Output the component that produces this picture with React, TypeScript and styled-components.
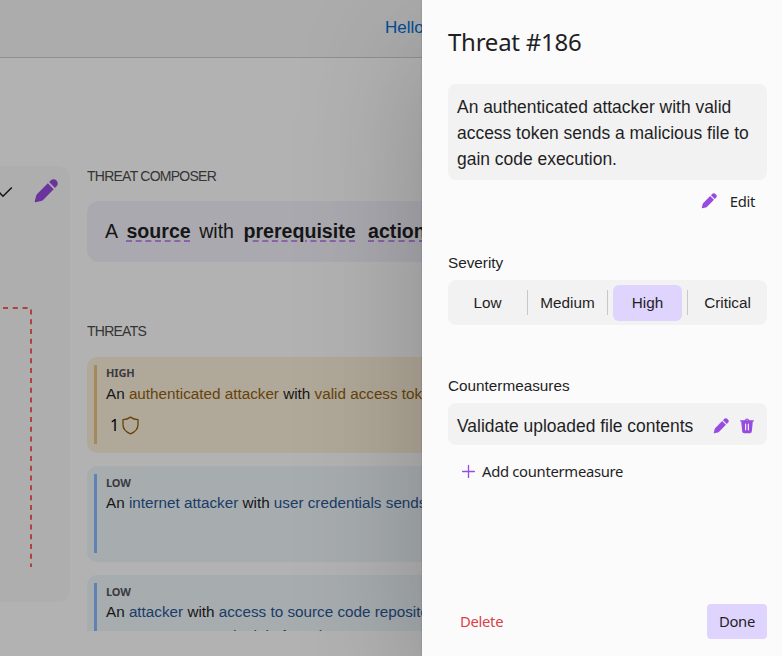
import React from 'react';
import styled, { createGlobalStyle, css } from 'styled-components';

const GlobalStyle = createGlobalStyle`
  * { box-sizing: border-box; }
  html, body, #root { height: 100%; }
  body {
    margin: 0;
    overflow: hidden;
    background: #fff;
    color: #1f1f26;
    font-family: "Liberation Sans", Arial, sans-serif;
  }
  button { font: inherit; color: inherit; border: 0; background: none; padding: 0; margin: 0; }
`;

const Shell = styled.div`
  position: relative;
  height: 656px;
  width: 782px;
  overflow: hidden;
`;

const TopBar = styled.header`
  display: flex;
  height: 58px;
  padding: 18px 0 0 385px;
  background: #f6f6f6;
  border-bottom: 1px solid #cfcfcf;
`;

const UserLink = styled.a`
  font-size: 17px;
  line-height: 20px;
  color: #0070d8;
  white-space: nowrap;
`;

const Main = styled.main`
  display: flex;
  align-items: flex-start;
  gap: 17px;
  padding-top: 108px;
`;

const Canvas = styled.section`
  flex: 0 0 70px;
  height: 436px;
  background: #f9f9f9;
  border-radius: 0 12px 12px 0;
  overflow: hidden;
`;

const CanvasTools = styled.div`
  display: flex;
  align-items: center;
  justify-content: space-between;
  height: 43px;
  padding: 7px 7px 0 0;
`;

const ToolButton = styled.button`
  display: grid;
  place-items: center;
  width: 35px;
  height: 36px;
  background: #fafafa;
  border-radius: 4px;
`;

const Column = styled.section`
  flex: 0 0 640px;
  display: flex;
  flex-direction: column;
  height: 465px;
  overflow: hidden;
`;

const Caption = styled.h2<{ $gap: number }>`
  margin: 0 0 ${(p) => p.$gap}px;
  font-size: 14px;
  font-weight: 400;
  line-height: 20px;
  letter-spacing: -0.75px;
  color: #4c4c4c;
`;

const Composer = styled.div`
  flex: none;
  height: 61px;
  margin-bottom: 59px;
  padding: 17px 18px;
  border-radius: 12px;
  background: #f4f3fb;
  font-size: 19.6px;
  line-height: 26px;
  white-space: pre;
`;

const Slot = styled.b`
  margin-right: 3px;
  margin-left: 4px;
  text-decoration: underline dashed 2px #c48fee;
  text-underline-offset: 2px;
`;

const tones = {
  high: { bg: '#fcf1da', bar: '#eac483', text: '#93600f' },
  low: { bg: '#f0f6fb', bar: '#8abaff', text: '#2a5795' },
};
type Tone = keyof typeof tones;

const ThreatCard = styled.article<{ $tone: Tone }>`
  display: flex;
  flex: none;
  gap: 9px;
  height: 96px;
  margin-bottom: 13px;
  padding: 8px 12px 9px 7px;
  border-radius: 10px;
  background: ${(p) => tones[p.$tone].bg};
  &::before {
    content: '';
    flex: 0 0 3px;
    background: ${(p) => tones[p.$tone].bar};
  }
  em { font-style: normal; color: ${(p) => tones[p.$tone].text}; }
`;

const Level = styled.div<{ $low?: boolean }>`
  padding-top: ${(p) => (p.$low ? 1 : 0)}px;
  height: 15px;
  font: 700 11px/15px "Noto Sans", "Open Sans", sans-serif;
  letter-spacing: -0.1px;
  color: #54555c;
`;

const Sentence = styled.p`
  margin: 2px 0 0;
  font-size: 15.25px;
  line-height: 24px;
  white-space: nowrap;
`;

const Counter = styled.div`
  display: flex;
  align-items: center;
  gap: 3px;
  margin: 9px 0 0 4px;
  font: 16px/20px "Noto Sans", sans-serif;
  color: #000;
`;

const Scrim = styled.div`
  position: absolute;
  inset: 0;
  background: rgba(0, 0, 0, 0.3);
`;

const Drawer = styled.aside`
  position: absolute;
  top: 0;
  right: 0;
  bottom: 0;
  width: 360px;
  display: flex;
  flex-direction: column;
  padding: 24px 15px 17px 26px;
  background: #fbfbfb;
  box-shadow: 0 0 2px rgba(0, 0, 0, 0.2), 0 44px 128px rgba(0, 0, 0, 0.22);
`;

const uiFont = css`
  font-family: "Noto Sans", "Open Sans", sans-serif;
`;

const Title = styled.h1`
  ${uiFont}
  margin: 0;
  font-size: 24px;
  line-height: 36px;
  font-weight: 400;
  letter-spacing: -0.25px;
`;

const Box = styled.div<{ $top: number }>`
  display: flex;
  align-items: center;
  margin-top: ${(p) => p.$top}px;
  border-radius: 8px;
  background: #f2f2f2;
`;

const Description = styled(Box)`
  height: 96px;
  padding: 1px 9px 0;
  font-size: 17.45px;
  line-height: 26px;
`;

const TextButton = styled.button<{ $gap?: number; $danger?: boolean }>`
  ${uiFont}
  display: flex;
  align-items: center;
  gap: ${(p) => p.$gap ?? 0}px;
  font-size: 14.8px;
  line-height: 20px;
  letter-spacing: -0.3px;
  color: ${(p) => (p.$danger ? '#dc3f46' : 'inherit')};
`;

const EditRow = styled.div`
  display: flex;
  justify-content: flex-end;
  margin-top: 11px;
  padding-right: 12px;
`;

const Label = styled.h2<{ $top: number }>`
  margin: ${(p) => p.$top}px 0 0;
  font-size: 15.3px;
  font-weight: 400;
  line-height: 20px;
`;

const Segments = styled(Box)`
  height: 45px;
`;

const Segment = styled.div`
  flex: 1;
  height: 25px;
  display: flex;
  align-items: center;
  justify-content: center;
  & + & { border-left: 1px solid #c8c8c8; }
`;

const SegmentButton = styled.button<{ $active?: boolean }>`
  flex: none;
  width: 69px;
  height: 36px;
  border-radius: 6px;
  font-size: 15.3px;
  background: ${(p) => (p.$active ? '#dfd4fd' : 'transparent')};
`;

const Measure = styled(Box)`
  height: 42px;
  padding: 4px 11px 0 9px;
  gap: 8px;
  font-size: 17.45px;
  line-height: 26px;
  span { flex: 1; white-space: nowrap; }
`;

const AddRow = styled.div`
  display: flex;
  margin-top: 16px;
  padding-left: 14px;
`;

const Footer = styled.footer`
  display: flex;
  align-items: center;
  justify-content: space-between;
  margin-top: auto;
  padding-left: 12px;
`;

const DoneButton = styled(TextButton)`
  justify-content: center;
  width: 60px;
  height: 35px;
  padding-bottom: 2px;
  border-radius: 4px;
  background: #dfd4fd;
`;

const DeleteButton = styled(TextButton)`
  padding-bottom: 2px;
`;

const Pencil = ({ size = 18 }: { size?: number }) => (
  <svg width={size} height={size} viewBox="0 0 20 20" fill="#984be0">
    <path d="M13 2.8a3 3 0 1 1 4.2 4.2l-.8.8-4.2-4.2.8-.8ZM11.3 4.5 3.7 12.1c-.4.4-.7.9-.8 1.45L2 17.4a.5.5 0 0 0 .6.6l3.8-.84a3 3 0 0 0 1.5-.8l7.6-7.65-4.2-4.2Z" />
  </svg>
);

const Trash = () => (
  <svg width="18" height="18" viewBox="0 0 18 18" fill="#984be0" fillRule="evenodd">
    <path d="M6.7 3.2a2.4 2.4 0 0 1 4.6 0h4.1c.8 0 .8 1.3 0 1.3h-.6l-1 9.9a2 2 0 0 1-2 1.8H6.2a2 2 0 0 1-2-1.8l-1-9.9h-.6c-.8 0-.8-1.3 0-1.3h4.1Zm1.3 0h2a1.1 1.1 0 0 0-2 0Zm-1 4v5.6c0 .8 1.2.8 1.2 0V7.2c0-.8-1.2-.8-1.2 0Zm2.8 0v5.6c0 .8 1.2.8 1.2 0V7.2c0-.8-1.2-.8-1.2 0Z" />
  </svg>
);

const Plus = () => (
  <svg width="13" height="14" viewBox="0 0 13 14" fill="none" stroke="#984be0" strokeWidth="1.3" strokeLinecap="round">
    <path d="M6.5 1.5v12M.6 7.5h11.8" />
  </svg>
);

const Check = () => (
  <svg width="13" height="14" viewBox="0 0 13 14" fill="none" stroke="#1f1f26" strokeWidth="1.5">
    <path d="M-3 6 3 12.3l8.8-8.8" />
  </svg>
);

const Shield = () => (
  <svg width="17" height="19" viewBox="0 0 17 19" fill="none" stroke="#93600f" strokeWidth="1.3" strokeLinejoin="round">
    <path d="M8.5 1.1C6.3 2.7 3.7 3.5 1 3.6v5c0 4.7 3 7.6 7.5 9.2C13 16.2 16 13.3 16 8.6v-5C13.3 3.5 10.7 2.7 8.5 1.1Z" />
  </svg>
);

const Boundary = () => (
  <svg width="70" height="380" viewBox="0 0 70 380" fill="none" stroke="#ff2828" strokeWidth="1.5" strokeDasharray="5 4.77">
    <path d="M3 99h28" />
    <path d="M31 100.5V358" />
  </svg>
);

const levels = ['Low', 'Medium', 'High', 'Critical'];

export default function App() {
  return (
    <>
      <GlobalStyle />
      <Shell>
        <TopBar>
          <UserLink>Hello</UserLink>
        </TopBar>
        <Main>
          <Canvas>
            <CanvasTools>
              <Check />
              <ToolButton aria-label="Edit diagram"><Pencil size={28} /></ToolButton>
            </CanvasTools>
            <Boundary />
          </Canvas>
          <Column>
            <Caption $gap={15}>THREAT COMPOSER</Caption>
            <Composer>
              A <Slot>source</Slot> with <Slot>prerequisite</Slot> <Slot>action</Slot>
            </Composer>
            <Caption $gap={16}>THREATS</Caption>
            <ThreatCard $tone="high">
              <div>
                <Level>HIGH</Level>
                <Sentence>An <em>authenticated attacker</em> with <em>valid access token</em></Sentence>
                <Counter>1 <Shield /></Counter>
              </div>
            </ThreatCard>
            <ThreatCard $tone="low">
              <div>
                <Level $low>LOW</Level>
                <Sentence>An <em>internet attacker</em> with <em>user credentials</em> <em>sends</em></Sentence>
              </div>
            </ThreatCard>
            <ThreatCard $tone="low">
              <div>
                <Level $low>LOW</Level>
                <Sentence>
                  An <em>attacker</em> with <em>access to source code repository</em>
                  <br />
                  <em>cause permanent denial of service</em>
                </Sentence>
              </div>
            </ThreatCard>
          </Column>
        </Main>
        <Scrim />
        <Drawer>
          <Title>Threat #186</Title>
          <Description $top={24}>
            An authenticated attacker with valid access token sends a malicious file to gain code execution.
          </Description>
          <EditRow>
            <TextButton $gap={12}><Pencil />Edit</TextButton>
          </EditRow>
          <Label $top={42}>Severity</Label>
          <Segments $top={7}>
            {levels.map((level) => (
              <Segment key={level}>
                <SegmentButton $active={level === 'High'}>{level}</SegmentButton>
              </Segment>
            ))}
          </Segments>
          <Label $top={51}>Countermeasures</Label>
          <Measure $top={7}>
            <span>Validate uploaded file contents</span>
            <Pencil />
            <Trash />
          </Measure>
          <AddRow>
            <TextButton $gap={7}><Plus />Add countermeasure</TextButton>
          </AddRow>
          <Footer>
            <DeleteButton $danger>Delete</DeleteButton>
            <DoneButton>Done</DoneButton>
          </Footer>
        </Drawer>
      </Shell>
    </>
  );
}
